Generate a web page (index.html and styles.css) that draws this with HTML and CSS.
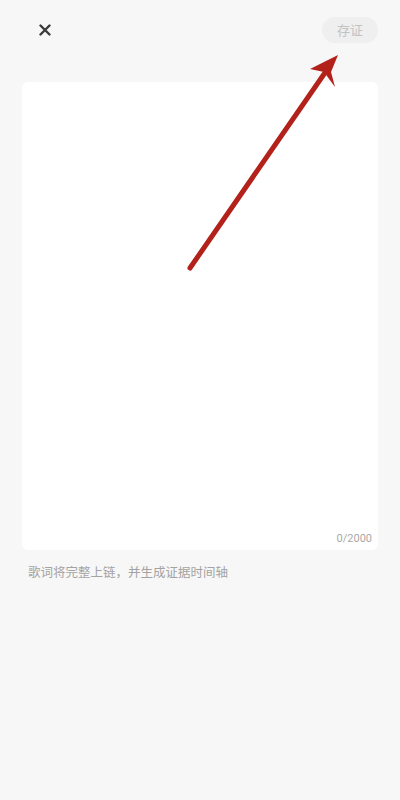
FILE: index.html
```html
<!DOCTYPE html>
<html lang="zh">
<head>
<meta charset="utf-8">
<link rel="stylesheet" href="styles.css">
</head>
<body>
<div class="page">
  <header class="topbar">
    <button class="close" aria-label="关闭">
      <svg width="12" height="12" viewBox="0 0 12 12"><path d="M1.5 1.5 L10.5 10.5 M10.5 1.5 L1.5 10.5" stroke="#3a3a3a" stroke-width="2.4" stroke-linecap="round"/></svg>
    </button>
    <button class="save">存证</button>
  </header>
  <div class="card">
    <div class="editor"></div>
    <div class="count">0/2000</div>
  </div>
  <p class="hint">歌词将完整上链，并生成证据时间轴</p>
  <svg class="arrow" width="400" height="800" viewBox="0 0 400 800">
    <line x1="190" y1="268" x2="331" y2="64" stroke="#b3221a" stroke-width="5" stroke-linecap="round"/>
    <polygon points="338,55 310,69 324,72 335,87 331,72" fill="#b3221a"/>
  </svg>
</div>
</body>
</html>
```

FILE: styles.css
```css
html, body {
  margin: 0;
  padding: 0;
  background: #f7f7f7;
}
body {
  font-family: "Noto Sans CJK SC", "Noto Sans", sans-serif;
}
.page {
  position: relative;
  width: 400px;
  height: 800px;
  overflow: hidden;
}
.topbar {
  display: flex;
  justify-content: space-between;
  align-items: center;
  height: 26px;
  padding: 17px 22px 0 39px;
}
.close {
  border: none;
  background: none;
  padding: 0;
  width: 12px;
  height: 12px;
  display: flex;
}
.save {
  border: none;
  background: #efefef;
  color: #c2c2c2;
  font-family: "Noto Sans CJK SC", sans-serif;
  font-size: 13px;
  height: 26px;
  width: 56px;
  border-radius: 13px;
  padding: 0;
  line-height: 26px;
}
.card {
  margin: 39px 22px 0 22px;
  height: 468px;
  background: #ffffff;
  border-radius: 6px;
  display: flex;
  flex-direction: column;
}
.editor {
  flex: 1;
}
.count {
  text-align: right;
  font-family: "Roboto", "Noto Sans", sans-serif;
  font-size: 11px;
  color: #a8a8a8;
  padding: 0 6px 4px 0;
  line-height: 14px;
}
.hint {
  margin: 13px 0 0 28px;
  font-size: 12.5px;
  color: #a3a3a3;
  line-height: 18px;
}
.arrow {
  position: absolute;
  left: 0;
  top: 0;
  pointer-events: none;
}
```
